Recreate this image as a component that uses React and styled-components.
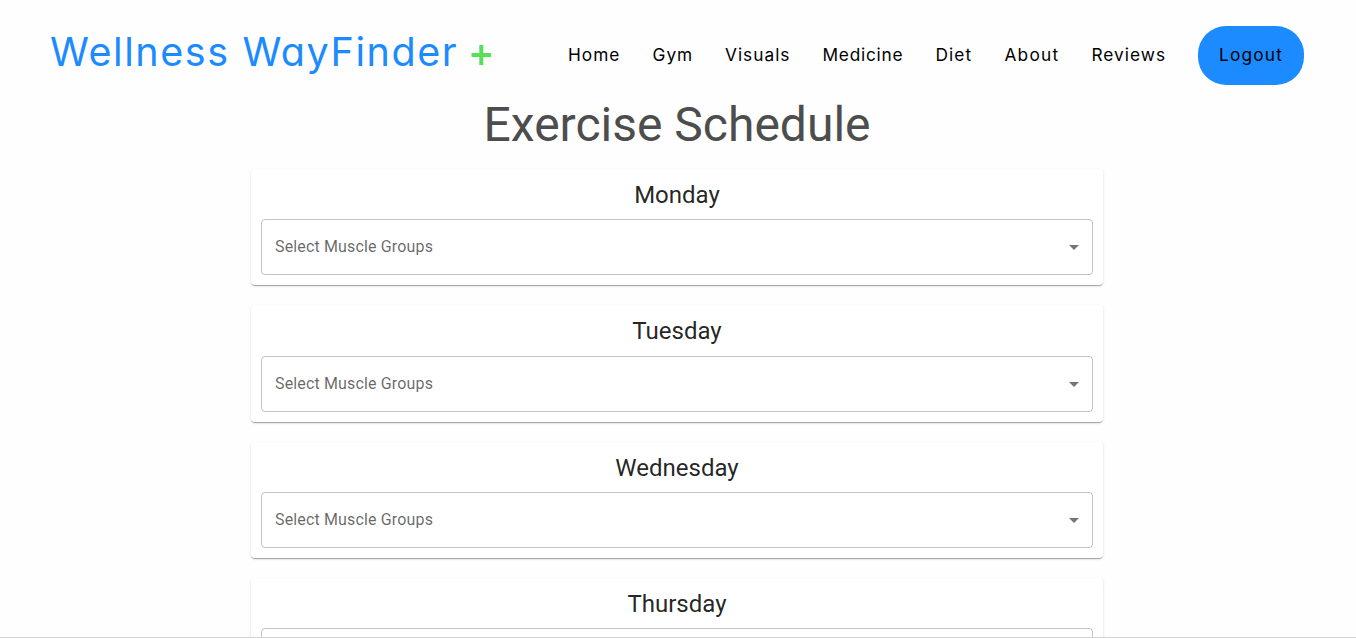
import React from "react";
import styled, { createGlobalStyle } from "styled-components";

const GlobalStyle = createGlobalStyle`
  * { box-sizing: border-box; }
  html, body { height: 100%; }
  body {
    margin: 0;
    background: #fefefe;
    font-family: Roboto, "Liberation Sans", sans-serif;
    overflow: hidden;
  }
`;

const Page = styled.div`
  height: 638px;
  overflow: hidden;
  border-bottom: 1px solid #d2d2d2;
`;

const Header = styled.header`
  display: flex;
  align-items: center;
  justify-content: space-between;
  height: 85px;
  padding: 26px 52px 0 50px;
`;

const Brand = styled.div`
  display: flex;
  align-items: center;
  color: #1b8bff;
  font-family: Inter, sans-serif;
  font-size: 39.5px;
  font-weight: 400;
  line-height: 59px;
  font-feature-settings: "cv11";
  white-space: nowrap;
`;

const BrandName = styled.span`
  width: 421px;
  margin-top: -6px;
  letter-spacing: 1.57px;
`;

const Plus = styled.svg`
  width: 20px;
  height: 20px;
  margin-top: -1px;
`;

const Nav = styled.nav`
  display: flex;
  align-items: center;
`;

const NavLink = styled.a`
  width: ${(p) => p.$width}px;
  padding-bottom: 2px;
  color: #000;
  font-family: Inter, sans-serif;
  font-size: 17.3px;
  line-height: 57px;
  letter-spacing: ${(p) => p.$spacing}px;
  white-space: nowrap;
`;

const LogoutButton = styled.button`
  width: 106px;
  height: 59px;
  padding: 0 0 2px 0;
  border: 0;
  border-radius: 28px;
  background: #1b8bff;
  color: #000;
  font-family: Inter, sans-serif;
  font-size: 17.3px;
  letter-spacing: 1.2px;
`;

const Schedule = styled.main`
  width: 852px;
  margin-left: 251px;
`;

const Title = styled.h1`
  margin: 12px 0 15.8px;
  color: #4d4d4d;
  font-size: 48px;
  font-weight: 400;
  line-height: 56px;
  text-align: center;
`;

const DayCard = styled.section`
  padding: 10px;
  margin-bottom: 20px;
  border-radius: 4px;
  background: #fff;
  box-shadow: 0 2px 1px -1px rgba(0, 0, 0, 0.2), 0 1px 1px 0 rgba(0, 0, 0, 0.14),
    0 1px 3px 0 rgba(0, 0, 0, 0.12);
`;

const DayName = styled.h2`
  margin: 0 0 8.4px;
  color: rgba(0, 0, 0, 0.87);
  font-size: 24px;
  font-weight: 400;
  line-height: 1.334;
  text-align: center;
`;

const Select = styled.div`
  display: flex;
  align-items: center;
  justify-content: space-between;
  height: 56px;
  padding: 0 6px 0 13px;
  border: 1px solid rgba(0, 0, 0, 0.23);
  border-radius: 4px;
`;

const SelectLabel = styled.span`
  padding-bottom: 1px;
  color: rgba(0, 0, 0, 0.6);
  font-size: 16px;
  line-height: 23px;
  letter-spacing: 0.15px;
`;

const Arrow = styled.svg`
  width: 24px;
  height: 24px;
  fill: rgba(0, 0, 0, 0.54);
`;

const links = [
  { label: "Home", width: 84.5, spacing: 1 },
  { label: "Gym", width: 72.5, spacing: 1 },
  { label: "Visuals", width: 97.5, spacing: 1 },
  { label: "Medicine", width: 113, spacing: 0.75 },
  { label: "Diet", width: 69, spacing: 1.1 },
  { label: "About", width: 87, spacing: 1.2 },
  { label: "Reviews", width: 106.5, spacing: 1 },
];

const days = ["Monday", "Tuesday", "Wednesday", "Thursday"];

export default function App() {
  return (
    <Page>
      <GlobalStyle />
      <Header>
        <Brand>
          <BrandName>Wellness WayFinder</BrandName>
          <Plus viewBox="0 0 20 20" aria-hidden="true">
            <path d="M10.3 0V20M0.5 10H20" stroke="#54e158" strokeWidth="4" />
          </Plus>
        </Brand>
        <Nav>
          {links.map((l) => (
            <NavLink key={l.label} $width={l.width} $spacing={l.spacing}>
              {l.label}
            </NavLink>
          ))}
          <LogoutButton>Logout</LogoutButton>
        </Nav>
      </Header>
      <Schedule>
        <Title>Exercise Schedule</Title>
        {days.map((day) => (
          <DayCard key={day}>
            <DayName>{day}</DayName>
            <Select>
              <SelectLabel>Select Muscle Groups</SelectLabel>
              <Arrow viewBox="0 0 24 24">
                <path d="M7 10l5 5 5-5z" />
              </Arrow>
            </Select>
          </DayCard>
        ))}
      </Schedule>
    </Page>
  );
}
